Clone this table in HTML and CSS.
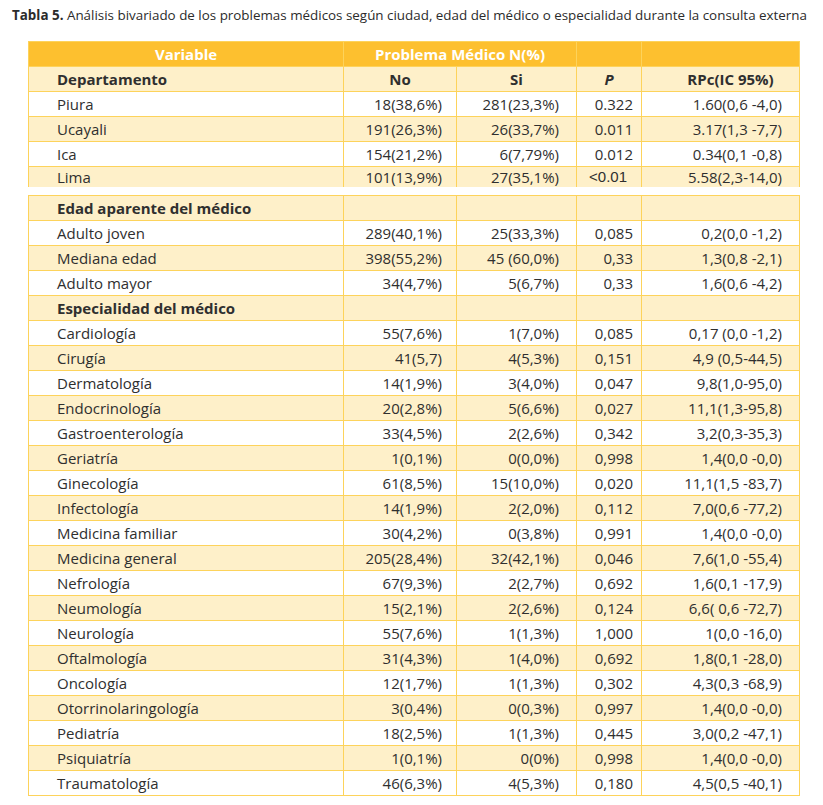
FILE: index.html
```html
<!DOCTYPE html>
<html lang="es">
<head>
<meta charset="utf-8">
<title>Tabla 5</title>
<link rel="stylesheet" href="styles.css">
</head>
<body>
<p class="caption"><b>Tabla 5.</b> Análisis bivariado de los problemas médicos según ciudad, edad del médico o especialidad durante la consulta externa</p>

<table class="tbl t1">
  <colgroup><col class="c1"><col class="c2"><col class="c3"><col class="c4"><col class="c5"></colgroup>
  <tr class="head">
    <td class="ctr">Variable</td>
    <td class="ctr" colspan="2">Problema Médico N(%)</td>
    <td></td>
    <td></td>
  </tr>
  <tr class="sub">
    <td class="lbl">Departamento</td>
    <td class="ctr">No</td>
    <td class="ctr">Si</td>
    <td class="ctr"><i>P</i></td>
    <td class="ctr rpch">RPc(IC 95%)</td>
  </tr>
  <tr><td class="lbl">Piura</td><td>18(38,6%)</td><td>281(23,3%)</td><td>0.322</td><td>1.60(0,6 -4,0)</td></tr>
  <tr class="alt"><td class="lbl">Ucayali</td><td>191(26,3%)</td><td>26(33,7%)</td><td>0.011</td><td>3.17(1,3 -7,7)</td></tr>
  <tr><td class="lbl">Ica</td><td>154(21,2%)</td><td>6(7,79%)</td><td>0.012</td><td>0.34(0,1 -0,8)</td></tr>
  <tr class="alt last"><td class="lbl">Lima</td><td>101(13,9%)</td><td>27(35,1%)</td><td class="arial">&lt;0.01</td><td>5.58(2,3-14,0)</td></tr>
</table>

<table class="tbl t2">
  <colgroup><col class="c1"><col class="c2"><col class="c3"><col class="c4"><col class="c5"></colgroup>
  <tr class="alt"><td class="lbl b">Edad aparente del médico</td><td></td><td></td><td></td><td></td></tr>
  <tr><td class="lbl">Adulto joven</td><td>289(40,1%)</td><td>25(33,3%)</td><td>0,085</td><td>0,2(0,0 -1,2)</td></tr>
  <tr class="alt"><td class="lbl">Mediana edad</td><td>398(55,2%)</td><td>45 (60,0%)</td><td>0,33</td><td>1,3(0,8 -2,1)</td></tr>
  <tr><td class="lbl">Adulto mayor</td><td>34(4,7%)</td><td>5(6,7%)</td><td>0,33</td><td>1,6(0,6 -4,2)</td></tr>
  <tr class="alt"><td class="lbl b">Especialidad del médico</td><td></td><td></td><td></td><td></td></tr>
  <tr><td class="lbl">Cardiología</td><td>55(7,6%)</td><td>1(7,0%)</td><td>0,085</td><td>0,17 (0,0 -1,2)</td></tr>
  <tr class="alt"><td class="lbl">Cirugía</td><td>41(5,7)</td><td>4(5,3%)</td><td>0,151</td><td>4,9 (0,5-44,5)</td></tr>
  <tr><td class="lbl">Dermatología</td><td>14(1,9%)</td><td>3(4,0%)</td><td>0,047</td><td>9,8(1,0-95,0)</td></tr>
  <tr class="alt"><td class="lbl">Endocrinología</td><td>20(2,8%)</td><td>5(6,6%)</td><td>0,027</td><td>11,1(1,3-95,8)</td></tr>
  <tr><td class="lbl">Gastroenterología</td><td>33(4,5%)</td><td>2(2,6%)</td><td>0,342</td><td>3,2(0,3-35,3)</td></tr>
  <tr class="alt"><td class="lbl">Geriatría</td><td>1(0,1%)</td><td>0(0,0%)</td><td>0,998</td><td>1,4(0,0 -0,0)</td></tr>
  <tr><td class="lbl">Ginecología</td><td>61(8,5%)</td><td>15(10,0%)</td><td>0,020</td><td>11,1(1,5 -83,7)</td></tr>
  <tr class="alt"><td class="lbl">Infectología</td><td>14(1,9%)</td><td>2(2,0%)</td><td>0,112</td><td>7,0(0,6 -77,2)</td></tr>
  <tr><td class="lbl">Medicina familiar</td><td>30(4,2%)</td><td>0(3,8%)</td><td>0,991</td><td>1,4(0,0 -0,0)</td></tr>
  <tr class="alt"><td class="lbl">Medicina general</td><td>205(28,4%)</td><td>32(42,1%)</td><td>0,046</td><td>7,6(1,0 -55,4)</td></tr>
  <tr><td class="lbl">Nefrología</td><td>67(9,3%)</td><td>2(2,7%)</td><td>0,692</td><td>1,6(0,1 -17,9)</td></tr>
  <tr class="alt"><td class="lbl">Neumología</td><td>15(2,1%)</td><td>2(2,6%)</td><td>0,124</td><td>6,6( 0,6 -72,7)</td></tr>
  <tr><td class="lbl">Neurología</td><td>55(7,6%)</td><td>1(1,3%)</td><td>1,000</td><td>1(0,0 -16,0)</td></tr>
  <tr class="alt"><td class="lbl">Oftalmología</td><td>31(4,3%)</td><td>1(4,0%)</td><td>0,692</td><td>1,8(0,1 -28,0)</td></tr>
  <tr><td class="lbl">Oncología</td><td>12(1,7%)</td><td>1(1,3%)</td><td>0,302</td><td>4,3(0,3 -68,9)</td></tr>
  <tr class="alt"><td class="lbl">Otorrinolaringología</td><td>3(0,4%)</td><td>0(0,3%)</td><td>0,997</td><td>1,4(0,0 -0,0)</td></tr>
  <tr><td class="lbl">Pediatría</td><td>18(2,5%)</td><td>1(1,3%)</td><td>0,445</td><td>3,0(0,2 -47,1)</td></tr>
  <tr class="alt"><td class="lbl">Psiquiatría</td><td>1(0,1%)</td><td>0(0%)</td><td>0,998</td><td>1,4(0,0 -0,0)</td></tr>
  <tr><td class="lbl">Traumatología</td><td>46(6,3%)</td><td>4(5,3%)</td><td>0,180</td><td>4,5(0,5 -40,1)</td></tr>
</table>
</body>
</html>
```

FILE: styles.css
```css
html, body {
  margin: 0;
  padding: 0;
  background: #ffffff;
}
body {
  font-family: "Open Sans", "DejaVu Sans", sans-serif;
  color: #2f2f2f;
  font-size: 15px;
}
.caption {
  margin: 0;
  padding: 6px 0 0 12px;
  font-size: 13.4px;
  line-height: 18px;
  white-space: nowrap;
  color: #2b2b2b;
}
.caption b {
  font-weight: 700;
}
.tbl {
  border-collapse: collapse;
  table-layout: fixed;
  width: 771px;
  margin-left: 28px;
}
.t1 {
  margin-top: 17px;
}
.t2 {
  margin-top: 8px;
}
.c1 { width: 315px; }
.c2 { width: 113px; }
.c3 { width: 120px; }
.c4 { width: 65px; }
.c5 { width: 158px; }
.tbl td {
  border: 1px solid #fdd35b;
  height: 24px;
  padding: 0 17px 0 0;
  text-align: right;
  white-space: nowrap;
  line-height: 20px;
  vertical-align: middle;
}
.tbl td:nth-child(2) { padding-right: 14px; }
.tbl td:nth-child(4) { padding-right: 8px; }
.tbl td:nth-child(5) { padding-right: 17px; }
.tbl td.lbl {
  text-align: left;
  padding-left: 28px;
  padding-right: 0;
}
.tbl td.ctr {
  text-align: center;
  padding: 0;
}
.tbl td.rpch {
  padding-left: 20px;
}
.tbl .b { font-weight: 700; }
.alt td { background: #fef0c9; }
.head td {
  background: #fdc02f;
  color: #ffffff;
  font-weight: 700;
  border-color: #fdd35b;
}
.sub td {
  background: #fef0c9;
  font-weight: 700;
}
.sub td i { font-weight: 700; }
.last td {
  height: 19px;
  border-bottom: none;
}
.tbl td.arial {
  font-family: "Liberation Sans", Arial, sans-serif;
  padding-right: 14px;
}
```
